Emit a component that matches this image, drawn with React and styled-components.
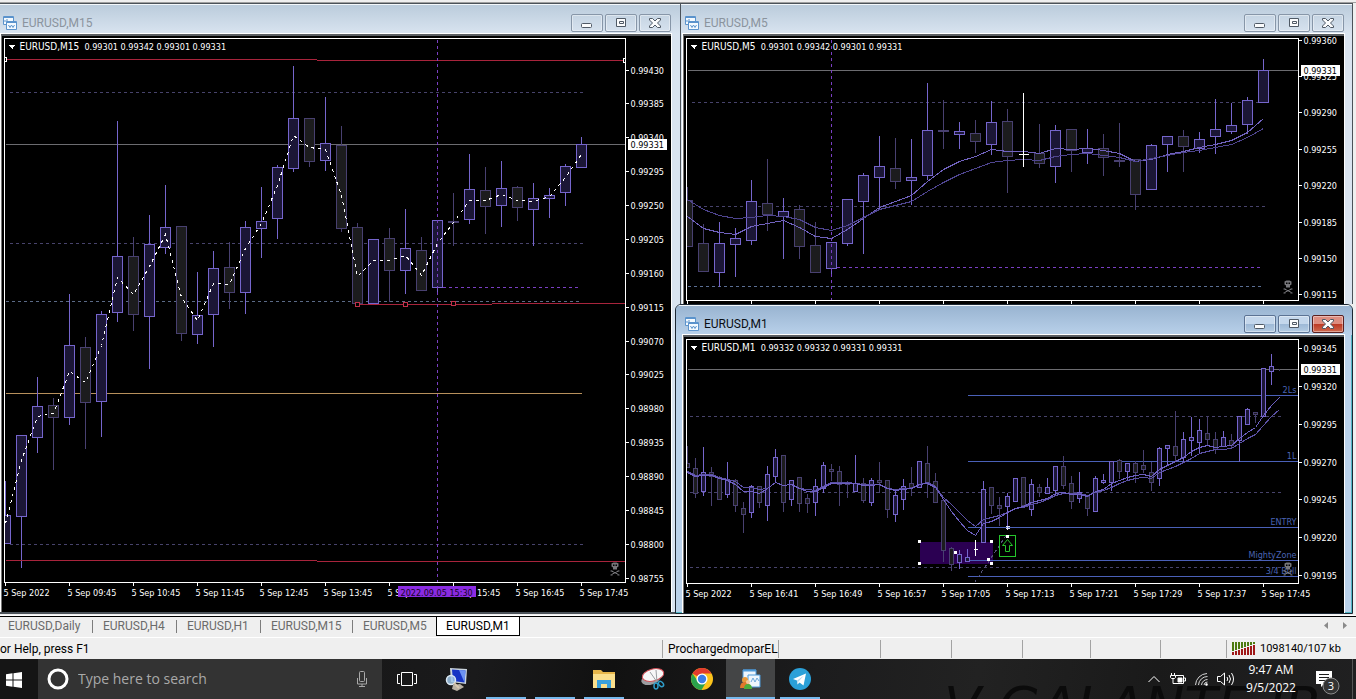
import React from 'react'
import styled, {createGlobalStyle, css} from 'styled-components'

const GlobalStyle = createGlobalStyle`
* {
    box-sizing: border-box;
}
body {
    margin: 0;
    overflow: hidden;
    background-color: #efefef;
    font-family: Roboto, 'Open Sans', sans-serif;
    font-size: 12px;
}
button {
    margin: 0;
    padding: 0;
    border: 0;
    background: none;
    font: inherit;
    color: inherit;
}
`

/* ---------- terminal windows ---------- */

const ToolbarEdge = styled.div`
height: 3px;
background-color: #efefef;
border-bottom: 1px solid #a0a0a0;
`

const Workspace = styled.main`
display: grid;
grid-template-columns: minmax(0, 681fr) minmax(0, 672fr);
padding-right: 3px;
height: 611px;
overflow: hidden;
`

const RightColumn = styled.div`
display: flex;
flex-direction: column;
min-width: 0;
`

const frames = {
    idle: {frame: '#d9e4f0', top: '#bbccdc', edge: '#4b5259', text: '#8b949e'},
    active: {frame: '#b9d1ea', top: '#99b4d1', edge: '#1c2733', text: '#0b0f14'}
}

const StyledWindow = styled.section`
display: flex;
flex-direction: column;
position: relative;
height: ${p => p.$height}px;
flex-shrink: 0;
overflow: hidden;
padding: 0 ${p => p.$right}px ${p => p.$base}px ${p => p.$left}px;
background-color: ${p => p.$skin.frame};
border-top: 1px solid ${p => p.$skin.edge};
border-right: 1px solid ${p => p.$skin.edge};
border-bottom: ${p => p.$bottom}px solid ${p => p.$skin.edge};
${p => p.$active && css`
    margin-left: -6px;
    border-left: 1px solid ${p.$skin.edge};
    border-radius: 6px 6px 0 0;
    box-shadow: inset 0 -1px #4fb6c4, inset -1px 0 #4fb6c4;
`}
`

const TitleBar = styled.header`
display: flex;
align-items: center;
flex-shrink: 0;
gap: 5px;
height: 30px;
margin: 0 -${p => p.$right}px 0 -${p => p.$left}px;
padding: 6px ${p => p.$right}px 0 ${p => p.$left + 2}px;
border-top: 1px solid #f4f8fb;
background: linear-gradient(${p => p.$skin.top}, ${p => p.$skin.frame});
color: ${p => p.$skin.text};
h2 {
    flex: 1;
    margin: 0;
    font-size: 12px;
    line-height: 16px;
    font-weight: 400;
}
`

const WindowButtons = styled.div`
display: flex;
gap: 2px;
`

const WindowButton = styled.button`
display: flex;
align-items: center;
justify-content: center;
width: 32px;
height: 18px;
border: 1px solid #8796a8;
border-radius: 2px;
box-shadow: inset 0 0 0 1px rgba(255, 255, 255, 0.4);
${p => p.$active && css`
    border-color: #5c7394;
    background: linear-gradient(#c4d7ec 50%, #9db8d6 50%, #b4cce4);
`}
${p => p.$danger && css`
    border-color: #5a2020;
    background: linear-gradient(#dd8d80 50%, #bb3824 50%, #cf6a4f);
`}
`

const ChartArea = styled.div`
display: grid;
flex: 1;
grid-template-columns: minmax(0, 1fr) 45px;
grid-template-rows: ${p => p.$plot}px minmax(0, 1fr);
padding: 2px 0 0 2px;
background-color: #000;
border-top: 2px solid #5a5e62;
border-left: 1px solid #777;
box-shadow: 0 0 0 1px #fff;
`

const Plot = styled.svg`
display: block;
width: 100%;
height: 100%;
border: 1px solid #fff;
overflow: hidden;
`

const Axis = styled.svg`
display: block;
width: 100%;
height: 100%;
grid-column: ${p => p.$wide ? '1 / 3' : 'auto'};
overflow: visible;
`

const ChartText = styled.text`
font-family: 'DejaVu Sans Condensed', 'DejaVu Sans', sans-serif;
font-size: 9px;
fill: ${p => p.$color || '#fff'};
white-space: pre;
tspan {
    font-size: 10px;
}
`

const RED = '#a8243c'
const PURPLE = '#7a3fc4'
const DASH = '#47436b'
const BLUE = '#4a60b8'
const UP = '#7565cc'
const DOWN = '#484070'

// candles: [high, open/close top, open/close bottom, low, rising]
const m15 = {
    title: 'EURUSD,M15',
    quote: '  0.99301 0.99342 0.99301 0.99331',
    origin: [5, 39],
    edge: [626, 583],
    step: 16,
    half: 5,
    candles: [
        [480, 515, 543, 543, 1], [435, 435, 516, 567, 1], [376, 406, 437, 452, 1], [397, 405, 417, 469, 0],
        [293, 345, 417, 424, 1], [336, 347, 402, 448, 0], [310, 314, 401, 436, 1], [120, 256, 312, 321, 1],
        [236, 256, 314, 330, 0], [214, 244, 316, 368, 1], [184, 227, 247, 253, 1], [225, 226, 333, 340, 0],
        [271, 315, 334, 343, 1], [250, 268, 314, 346, 1], [241, 267, 292, 308, 0], [220, 227, 292, 313, 1],
        [186, 221, 228, 257, 1], [164, 167, 218, 238, 1], [65, 118, 168, 171, 1], [118, 118, 161, 166, 0],
        [96, 143, 160, 170, 1], [125, 145, 228, 231, 0], [222, 227, 303, 303, 0], [238, 239, 303, 303, 1],
        [227, 238, 270, 301, 0], [208, 248, 270, 293, 1], [236, 250, 290, 290, 0], [220, 220, 287, 293, 1],
        [192, 221, 222, 245, 0], [153, 189, 219, 223, 1], [166, 190, 206, 233, 0], [160, 188, 205, 226, 1],
        [185, 187, 207, 220, 0], [182, 198, 209, 245, 1], [187, 195, 198, 217, 1], [163, 166, 192, 205, 1],
        [136, 144, 167, 167, 1]
    ],
    averages: [{
        color: '#fff',
        dash: '3 4',
        values: [523, 460, 416, 413, 371, 382, 345, 277, 294, 266, 234, 297, 320, 283, 284, 248, 223, 185, 135, 147,
            149, 195, 276, 260, 260, 255, 275, 243, 222, 200, 200, 194, 200, 201, 196, 177, 154]
    }],
    price: 144,
    prices: [[70, '0.99430'], [103, '0.99385'], [137, '0.99340'], [171, '0.99295'], [205, '0.99250'], [239, '0.99205'],
        [273, '0.99160'], [307, '0.99115'], [341, '0.99070'], [374, '0.99025'], [408, '0.98980'], [442, '0.98935'],
        [476, '0.98890'], [510, '0.98845'], [544, '0.98800'], [578, '0.98755']],
    times: ['2022', '09:45', '10:45', '11:45', '12:45', '13:45', '14:45', '15:45', '16:45', '17:45'],
    // lines: [x1, y1, x2, y2, color, dash]
    lines: [
        [9, 92, 582, 92, DASH, '3 3'], [9, 243, 582, 243, DASH, '3 3'], [9, 544, 582, 544, DASH, '3 3'],
        [5, 301, 578, 301, '#5b6a86', '3 3'], [5, 393, 581, 393, '#b8905c']
    ],
    marks: [
        [5, 59, 316, 59, RED], [316, 60, 625, 60, RED], [357, 304, 491, 304, RED], [491, 303, 625, 303, RED],
        [5, 560, 316, 560, RED], [316, 561, 625, 561, RED],
        [437, 39, 437, 582, PURPLE, '3 3'], [442, 287, 578, 287, PURPLE, '3 3']
    ],
    skull: [610, 562]
}

const m5 = {
    title: 'EURUSD,M5',
    quote: '  0.99301 0.99342 0.99301 0.99331',
    origin: [687, 39],
    edge: [1299, 301],
    step: 16,
    half: 5,
    candles: [
        [186, 200, 246, 246, 0], [223, 243, 271, 271, 0], [221, 243, 272, 286, 1], [227, 238, 244, 276, 1],
        [179, 201, 240, 244, 1], [158, 203, 214, 230, 0], [197, 211, 216, 258, 1], [204, 209, 246, 258, 0],
        [221, 245, 272, 272, 0], [242, 242, 268, 276, 1], [199, 199, 243, 245, 1], [172, 175, 201, 253, 1],
        [135, 166, 177, 208, 1], [137, 168, 181, 188, 0], [138, 177, 180, 204, 1], [82, 130, 175, 179, 1],
        [99, 130, 131, 148, 0], [121, 131, 134, 148, 1], [119, 133, 141, 152, 0], [100, 122, 144, 154, 1],
        [108, 121, 156, 192, 0], null, [123, 153, 163, 167, 0], [124, 130, 166, 182, 1],
        [129, 129, 150, 171, 0], [128, 148, 152, 163, 1], [133, 148, 157, 175, 0], [122, 160, 161, 166, 0],
        [159, 159, 194, 209, 0], [143, 145, 189, 189, 1], [136, 136, 144, 171, 1], [129, 136, 146, 171, 0],
        [131, 139, 148, 152, 1], [98, 129, 136, 153, 1], [102, 125, 131, 133, 1], [96, 100, 124, 133, 1],
        [58, 70, 102, 102, 1]
    ],
    averages: [{
        color: '#7062be',
        values: [216, 228, 232, 234, 226, 223, 220, 227, 236, 238, 229, 218, 207, 201, 195, 181, 169, 161, 156, 149,
            151, 151, 153, 148, 149, 148, 150, 153, 161, 159, 154, 151, 147, 144, 140, 132, 118]
    }, {
        color: '#4f4590',
        values: [199, 209, 215, 218, 217, 215, 216, 219, 227, 230, 225, 217, 209, 205, 201, 191, 182, 174, 168, 162,
            160, 159, 160, 156, 154, 153, 155, 157, 161, 158, 155, 152, 150, 147, 144, 137, 128]
    }],
    price: 70,
    prices: [[40, '0.99360'], [76, '0.99325'], [112, '0.99290'], [149, '0.99255'], [185, '0.99220'], [222, '0.99185'],
        [258, '0.99150'], [294, '0.99115']],
    times: [],
    lines: [
        [691, 102, 1264, 102, DASH, '3 3'], [691, 206, 1264, 206, DASH, '3 3'], [687, 286, 1261, 286, '#5b6f94', '3 3']
    ],
    marks: [
        [831, 39, 831, 300, PURPLE, '3 3'], [836, 267, 1261, 267, PURPLE, '3 3'],
        [1023, 92, 1023, 166, '#fff'], [1018, 154, 1028, 154, '#fff']
    ],
    skull: [1283, 280]
}

const m1 = {
    title: 'EURUSD,M1',
    quote: '  0.99332 0.99332 0.99331 0.99331',
    origin: [687, 340],
    edge: [1299, 584],
    step: 8,
    half: 2,
    candles: [
        [445, 463, 467, 467, 0], [457, 468, 493, 497, 0], [446, 472, 491, 495, 1], [466, 472, 476, 505, 0],
        [475, 477, 499, 499, 0], [461, 480, 494, 497, 1], [478, 480, 505, 511, 0], [501, 508, 514, 532, 0],
        [484, 486, 512, 517, 1], [485, 486, 502, 507, 0], [465, 474, 505, 520, 1], [448, 457, 476, 481, 1],
        [455, 455, 502, 511, 0], [480, 480, 499, 505, 1], [477, 477, 503, 511, 0], [493, 498, 503, 512, 0],
        [478, 486, 502, 515, 1], [461, 465, 488, 492, 1], [463, 469, 471, 480, 0], [465, 471, 484, 505, 0],
        [480, 482, 484, 497, 0], [454, 483, 491, 491, 1], [477, 483, 500, 502, 0], [477, 480, 502, 505, 1],
        [461, 480, 482, 492, 0], [480, 480, 509, 517, 0], [490, 495, 514, 521, 1], [478, 486, 499, 509, 1],
        [466, 483, 487, 495, 0], [460, 461, 487, 487, 1], [445, 463, 482, 497, 0], [472, 481, 502, 502, 0],
        [498, 500, 550, 561, 0], [546, 548, 564, 570, 0], [549, 554, 562, 568, 1], [548, 557, 561, 561, 1],
        null, [480, 489, 542, 542, 1], [487, 487, 505, 513, 0], [496, 505, 508, 525, 0],
        [492, 496, 506, 526, 1], [478, 478, 501, 501, 1], [477, 477, 505, 505, 0], [478, 484, 509, 515, 1],
        [483, 487, 492, 496, 0], [477, 487, 493, 493, 1], [466, 466, 490, 494, 1], [455, 466, 485, 488, 0],
        [475, 483, 501, 508, 0], [471, 492, 498, 502, 1], [494, 496, 508, 515, 0], [475, 478, 511, 511, 1],
        [473, 480, 482, 483, 1], [461, 461, 482, 490, 1], [458, 460, 471, 478, 0], [462, 463, 471, 480, 1],
        [460, 463, 472, 482, 0], [449, 465, 469, 472, 0], [461, 472, 482, 490, 0], [446, 448, 478, 485, 1],
        [445, 445, 448, 465, 1], [410, 446, 455, 461, 0], [431, 439, 457, 461, 1], [416, 437, 440, 455, 1],
        [418, 430, 442, 453, 1], [416, 433, 439, 445, 0], [431, 439, 449, 453, 0], [430, 437, 446, 446, 1],
        [433, 440, 445, 447, 0], [415, 416, 440, 461, 1], [407, 409, 424, 424, 1], [412, 412, 414, 422, 0],
        [368, 368, 416, 416, 1], [353, 366, 371, 384, 1], [368, 369, 369, 370, 0]
    ],
    averages: [{
        color: '#5a50a4',
        values: [471, 475, 474, 474, 477, 479, 481, 487, 487, 489, 488, 482, 485, 484, 488, 489, 490, 486, 482, 482,
            482, 483, 484, 484, 484, 488, 489, 488, 488, 484, 482, 486, 497, 504, 512, 520, 526, 519, 517, 515,
            512, 508, 507, 504, 502, 499, 495, 493, 493, 493, 495, 492, 490, 487, 483, 480, 478, 477, 478, 472,
            469, 466, 462, 458, 453, 451, 449, 449, 448, 443, 438, 434, 425, 416, 409]
    }, {
        color: '#6c5fc0',
        values: [472, 476, 475, 475, 478, 480, 484, 491, 491, 493, 488, 482, 485, 484, 488, 491, 491, 487, 483, 483,
            483, 483, 485, 485, 484, 488, 490, 489, 488, 484, 483, 487, 499, 511, 521, 530, 535, 523, 521, 517,
            512, 508, 506, 502, 500, 498, 493, 492, 494, 494, 496, 491, 489, 483, 480, 477, 475, 474, 476, 469,
            465, 461, 457, 451, 447, 445, 447, 446, 445, 438, 432, 427, 415, 405, 397]
    }],
    price: 369,
    prices: [[348, '0.99345'], [386, '0.99320'], [424, '0.99295'], [462, '0.99270'], [499, '0.99245'],
        [537, '0.99220'], [575, '0.99195']],
    times: ['2022', '16:41', '16:49', '16:57', '17:05', '17:13', '17:21', '17:29', '17:37', '17:45'],
    lines: [
        [689, 416, 1280, 416, DASH, '3 3'], [689, 492, 1280, 492, DASH, '3 3'], [689, 567, 1280, 567, DASH, '3 3'],
        [967, 395, 1298, 395, BLUE], [967, 461, 1298, 461, BLUE], [967, 527, 1298, 527, BLUE],
        [967, 560, 1298, 560, BLUE], [967, 576, 1298, 576, BLUE],
        [974, 582, 1007, 533, '#55557a', '3 3']
    ],
    marks: [[975, 539, 975, 555, '#fff'], [973, 549, 977, 549, '#fff']],
    labels: [[389, '2Ls'], [455, '1L'], [521, 'ENTRY'], [554, 'MightyZone'], [570, '3/4 Bull']],
    skull: [1283, 562]
}

const Line = ({at: [x1, y1, x2, y2, color, dash]}) => (
    <line x1={x1} y1={y1} x2={x2} y2={y2} stroke={color} strokeDasharray={dash} />
)

const Handle = ({x, y}) => <rect x={x - 1} y={y - 1} width='2' height='2' fill='#fff' stroke='#fff' />

const Candle = ({x, half, candle: [high, top, bottom, low, rising]}) => (
    <g stroke={rising ? UP : DOWN}>
        <path d={`M${x} ${high}V${top}M${x} ${bottom}V${low}`} />
        <rect x={x - half} y={top} width={half * 2} height={bottom - top} fill={rising ? '#1b1636' : '#1c1c1e'} />
    </g>
)

const Skull = ({at: [x, y]}) => (
    <g transform={`translate(${x} ${y})`} stroke='none' fill='#77777b' shapeRendering='auto'>
        <path d='M3 0h3l2 1v3L6.500 5v2h-4V5L1 4V1z' />
        <path d='M2.500 2h1.500v1.500H2.500zM5 2h1.500v1.500H5z' fill='#000' />
        <path d='M1 8.500l7 3.500M8 8.500L1 12' stroke='#77777b' strokeWidth='1' />
        <path d='M0 8h2v1H0zM7 8h2v1H7zM0 12h2v1H0zM7 12h2v1H7z' />
    </g>
)

const M15Marks = () => (
    <g fill='#000'>
        {[[357, 304], [405, 304], [453, 303]].map(([x, y]) => (
            <rect key={x} x={x - 2} y={y - 2} width='4' height='4' stroke='#c0304a' />
        ))}
        <rect x='4' y='57' width='2' height='4' stroke='#fff' />
        <rect x='623' y='58' width='2' height='4' stroke='#fff' />
    </g>
)

const M1Marks = () => (
    <g>
        {[[919, 541], [991, 541], [919, 563], [991, 563], [955, 552], [988, 559]].map(([x, y]) => (
            <Handle key={`${x}-${y}`} x={x} y={y} />
        ))}
        <path d='M1005 526h4M1005 528h4M1007 525v4' stroke='#dde' />
        <rect x='999' y='535' width='16' height='21' fill='none' stroke='#25c52c' />
        <path d='M1007 539l-5 6h3v6h4v-6h3z' fill='none' stroke='#25c52c' shapeRendering='auto' />
        <Handle x={1007} y={536} />
    </g>
)

const Chart = ({data, children, zone}) => {
    const {origin: [left, top], edge: [right, bottom], step, half} = data
    const xAt = i => left + i * step
    // half pixel keeps one pixel strokes sharp
    const shift = (x, y) => `translate(${0.5 - x} ${0.5 - y})`

    return (
        <ChartArea $plot={bottom - top + 1}>
            <Plot role='img' aria-label={data.title}>
                <g transform={shift(left, top)} shapeRendering='crispEdges' fill='none'>
                    {zone}
                    {data.lines.map((line, i) => <Line key={i} at={line} />)}
                    <Line at={[left, data.price, right, data.price, '#6c6c70']} />
                    {data.candles.map((candle, i) => (
                        candle && <Candle key={i} x={xAt(i)} half={half} candle={candle} />
                    ))}
                    {data.averages.map(({color, dash, values}) => (
                        <polyline
                            key={color}
                            points={values.map((y, i) => `${xAt(i)},${y}`).join(' ')}
                            stroke={color}
                            strokeDasharray={dash}
                        />
                    ))}
                    {data.marks.map((line, i) => <Line key={i} at={line} />)}
                    {children}
                    {data.labels && data.labels.map(([y, label]) => (
                        <ChartText key={label} x='1296' y={y + 3} textAnchor='end' $color='#4a64b4'>{label}</ChartText>
                    ))}
                    <Skull at={data.skull} />
                    <path d={`M${left + 3} ${top + 5}h7l-3 4h-1z`} fill='#fff' />
                    <ChartText x={left + 14} y={top + 10}><tspan>{data.title}</tspan>{data.quote}</ChartText>
                </g>
            </Plot>
            <Axis>
                <g transform={shift(right, top - 1)} shapeRendering='crispEdges'>
                    {data.prices.map(([y, label]) => (
                        <g key={label}>
                            <path d={`M${right - 1} ${y}h3`} stroke='#fff' />
                            <ChartText x={right + 4} y={y + 3}>{label}</ChartText>
                        </g>
                    ))}
                    <rect x={right + 2} y={data.price - 5} width='38' height='10' fill='#fff' stroke='#fff' />
                    <ChartText x={right + 4} y={data.price + 3} $color='#000'>0.99331</ChartText>
                </g>
            </Axis>
            <Axis $wide>
                <g transform={shift(left - 1, bottom)} shapeRendering='crispEdges'>
                    {[...Array(10)].map((_, i) => (
                        <path key={i} d={`M${left + i * 64} ${bottom - 1}v3`} stroke='#fff' />
                    ))}
                    {data.times.map((time, i) => (
                        <ChartText key={time} x={left - 2 + i * 64} y={bottom + 12}>5 Sep {time}</ChartText>
                    ))}
                    {data === m15 && (
                        <g>
                            <rect x='398' y='586' width='77' height='10' fill='#8a2be2' stroke='#8a2be2' />
                            <ChartText x='400' y='595' $color='#160428'>2022.09.05 15:30</ChartText>
                        </g>
                    )}
                </g>
            </Axis>
        </ChartArea>
    )
}

const ChartIcon = () => (
    <svg width='14' height='14' viewBox='0 0 14 14' fill='#f4faff' stroke='#5b93cc' aria-hidden='true'>
        <path d='M.5 .5h10v8H.5z' />
        <path d='M0 1.500h11' />
        <path d='M2 6V4M4 6V3' fill='none' />
        <path d='M3.500 5.500h10v8h-10z' />
        <path d='M3 6.500h11' />
        <path d='M5.500 9l1.500 2.500L8.500 9l1.500 2.500L11.500 9' fill='none' />
    </svg>
)

const Glyph = ({children}) => (
    <svg width='14' height='12' viewBox='0 0 14 12' fill='#fbfcfd' stroke='#4f5965' aria-hidden='true'>{children}</svg>
)

const ChartWindow = ({data, left, right = 8, height, base = 8, bottom = 1, active, zone, children}) => {
    const skin = active ? frames.active : frames.idle
    return (
        <StyledWindow $skin={skin} $left={left} $right={right} $height={height} $base={base} $bottom={bottom} $active={active}>
            <TitleBar $skin={skin} $left={left} $right={right}>
                <ChartIcon />
                <h2>{data.title}</h2>
                <WindowButtons>
                    <WindowButton $active={active} aria-label='Minimize'>
                        <Glyph><rect x='1.500' y='6.500' width='10' height='4' rx='1' /></Glyph>
                    </WindowButton>
                    <WindowButton $active={active} aria-label='Maximize'>
                        <Glyph><path d='M2.500 1.500h9v8h-9z' /><path d='M5.500 4.500h4v2h-4z' /></Glyph>
                    </WindowButton>
                    <WindowButton $active={active} $danger={active} aria-label='Close'>
                        <Glyph><path d='M1.500 1.500h3L7 4l2.500-2.500h3V3l-3 3 3 3v1.500h-3L7 8l-2.500 2.500h-3V9l3-3-3-3z' /></Glyph>
                    </WindowButton>
                </WindowButtons>
            </TitleBar>
            <Chart data={data} zone={zone}>{children}</Chart>
        </StyledWindow>
    )
}

/* ---------- chart tabs and status bar ---------- */

const TabBar = styled.nav`
display: flex;
align-items: flex-start;
height: 22px;
margin-top: 2px;
border-top: 1px solid #000;
border-bottom: 1px solid #fff;
box-shadow: 0 -1px #fff;
color: #6b6b6b;
`

const Tab = styled.button`
position: relative;
width: ${p => p.$width}px;
height: 19px;
line-height: 19px;
padding-left: ${p => p.$first ? 8 : 10}px;
text-align: left;
&::after {
    content: '';
    position: absolute;
    top: 3px;
    right: 0;
    width: 1px;
    height: 13px;
    background-color: #7c7c7c;
}
${p => p.$last && css`
    &::after {
        display: none;
    }
`}
${p => p.$active && css`
    padding-left: 9px;
    color: #000;
    background-color: #fff;
    border: solid #000;
    border-width: 0 1px 1px;
    &::after {
        display: none;
    }
`}
`

const TabScroll = styled.div`
display: flex;
gap: 15px;
margin-left: auto;
padding: 4px 9px 0 0;
svg {
    display: block;
}
`

const StatusBar = styled.footer`
display: flex;
align-items: center;
height: 21px;
color: #000;
`

const StatusCell = styled.div`
display: flex;
align-items: center;
gap: 5px;
height: 18px;
width: ${p => p.$width}px;
padding-left: 5px;
border-left: 1px solid #a3a3a3;
font-size: ${p => p.$small ? 11 : 12}px;
white-space: nowrap;
`

const StatusMessage = styled.div`
flex: 1;
`

const tabs = [['EURUSD,Daily', 93], ['EURUSD,H4', 84], ['EURUSD,H1', 84], ['EURUSD,M15', 92], ['EURUSD,M5', 83], ['EURUSD,M1', 84]]

const Traffic = () => (
    <svg width='23' height='13' viewBox='0 0 23 13' aria-hidden='true'>
        {[0, 3, 6, 9, 12, 15, 18, 21].map((x, i) => (
            <g key={x}>
                <rect x={x} y='0' width='2' height={9 - i} fill='#4d7a10' />
                <rect x={x} y={10 - i} width='2' height={3 + i} fill='#a01818' />
            </g>
        ))}
    </svg>
)

/* ---------- taskbar ---------- */

const Taskbar = styled.footer`
display: flex;
position: relative;
height: 40px;
overflow: hidden;
background: linear-gradient(100deg, #121212, #1a1a1b 35%, #111 45%, #1c1c1d 60%, #222 72%, #1a1a1a 85%, #202021);
color: #fff;
`

const Wallpaper = styled.span`
position: absolute;
top: 20px;
right: 34px;
font: italic 54px/56px 'DejaVu Sans', sans-serif;
color: #0b0b0b;
white-space: nowrap;
`

const StartButton = styled.button`
width: 38px;
padding: 4px 0 0 6px;
text-align: left;
background-color: #151515;
`

const Search = styled.label`
display: flex;
align-items: center;
gap: 9px;
width: 344px;
padding: 0 13px 0 9px;
background-color: #333;
input {
    flex: 1;
    min-width: 0;
    padding: 0;
    border: 0;
    outline: 0;
    background: none;
    color: #fff;
    font: 14px/20px 'Open Sans', sans-serif;
}
input::placeholder {
    color: #a9a9a9;
    opacity: 1;
}
`

const Apps = styled.nav`
display: flex;
margin-left: 1px;
`

const TaskButton = styled.button`
display: flex;
align-items: center;
justify-content: center;
width: 49px;
height: 40px;
${p => p.$running && css`
    background: linear-gradient(#76b9ed, #76b9ed) bottom / 40px 2px no-repeat;
`}
${p => p.$focused && css`
    background: linear-gradient(#76b9ed, #76b9ed) bottom / 100% 2px no-repeat #444546;
`}
`

const Tray = styled.div`
display: flex;
align-items: center;
position: relative;
margin-left: auto;
svg {
    display: block;
}
`

const TrayButton = styled.button`
display: flex;
justify-content: center;
width: 24px;
`

const Clock = styled.div`
width: 66px;
text-align: center;
font: 12px/18px 'Open Sans', sans-serif;
`

const Notifications = styled.button`
display: flex;
justify-content: center;
width: 49px;
height: 40px;
padding-top: 11px;
margin-right: 3px;
border-right: 1px solid #555;
`

const Desktop = () => (
    <svg width='24' height='24' viewBox='0 0 24 24'>
        <path d='M5 1l17 1-1 15-15-2z' fill='#c9d3dc' />
        <path d='M7 2.500l13.500 1-1 12L8 14z' fill='#1634c4' />
        <path d='M14 3l6.500 .5-1 12z' fill='#6d93f2' />
        <path d='M8 18l7-1 4 3-7 4-5-2z' fill='#b9b1a4' />
        <circle cx='6' cy='13' r='4.500' fill='#9fc6e8' fillOpacity='.85' stroke='#dce9f4' strokeWidth='1.500' />
        <path d='M9 16l5 5' stroke='#d8c9b0' strokeWidth='2' />
    </svg>
)

const Folder = () => (
    <svg width='22' height='20' viewBox='0 0 22 20'>
        <path d='M0 1h8l2 2h12v16H0z' fill='#e7b64a' />
        <path d='M0 5h22v14H0z' fill='#fbdf8c' />
        <path d='M4 11h14v8h-4v-4H8v4H4z' fill='#3aa0dc' />
    </svg>
)

const Snip = () => (
    <svg width='24' height='24' viewBox='0 0 24 24'>
        <ellipse cx='10' cy='12' rx='10' ry='5.500' fill='#9b9ca0' transform='rotate(-18 10 12)' />
        <ellipse cx='12' cy='8' rx='11' ry='6' fill='#f7f7f7' stroke='#d05058' strokeWidth='1' transform='rotate(-14 12 8)' />
        <path d='M9 5l7 10M15 3l1 12' stroke='#9a9ea2' />
        <ellipse cx='15' cy='19' rx='2' ry='3' fill='none' stroke='#2e9cc8' strokeWidth='1.500' />
        <ellipse cx='20' cy='17' rx='2' ry='3' fill='none' stroke='#2e9cc8' strokeWidth='1.500' transform='rotate(-45 20 17)' />
    </svg>
)

const Chrome = () => (
    <svg width='22' height='22' viewBox='0 0 22 22'>
        <circle cx='11' cy='11' r='11' fill='#fbc31c' />
        <path d='M11 11L1.500 5.500A11 11 0 0 1 20.500 5.500H11z' fill='#e23b2e' />
        <path d='M1.500 5.500A11 11 0 0 0 10.500 22l5-8.500-4.500-2.500-5 1z' fill='#2ba24c' />
        <circle cx='11' cy='11' r='5.500' fill='#fff' />
        <circle cx='11' cy='11' r='4.200' fill='#3b7de8' />
    </svg>
)

const MetaTrader = () => (
    <svg width='22' height='20' viewBox='0 0 22 20'>
        <path d='M3 1h13v12H3z' fill='#eef6fd' stroke='#4d9bdb' />
        <path d='M3 1.500h13' stroke='#4d9bdb' strokeWidth='2' />
        <path d='M8 6h12v12H8z' fill='#eef6fd' stroke='#4d9bdb' />
        <path d='M11 13l2-4 2 4 2-4 2 3' fill='none' stroke='#6fa9dc' />
        <circle cx='5' cy='11' r='3' fill='#e89a3c' />
        <path d='M0 19q0-6 5-6t5 6z' fill='#e1782c' />
        <circle cx='8' cy='13' r='2' fill='#f2c9a0' />
        <path d='M4 20q0-5 4-5t4 5z' fill='#4cae3c' />
    </svg>
)

const Telegram = () => (
    <svg width='22' height='22' viewBox='0 0 22 22'>
        <circle cx='11' cy='11' r='11' fill='#2ba0d8' />
        <path d='M4 11l13-5.500-2.500 12-4-3-2 2-.5-4z' fill='#fff' />
        <path d='M8 12.500l7-5-5.500 6-1 3z' fill='#b6d9ee' />
    </svg>
)

const apps = [
    {name: 'Remote desktop', icon: <Desktop />},
    {name: 'Application 1', running: true},
    {name: 'Application 2', running: true},
    {name: 'File Explorer', icon: <Folder />, running: true},
    {name: 'Snipping Tool', icon: <Snip />},
    {name: 'Chrome', icon: <Chrome />},
    {name: 'MetaTrader', icon: <MetaTrader />, focused: true},
    {name: 'Telegram', icon: <Telegram />, running: true}
]

const App = () => {
    return (
        <>
            <GlobalStyle />
            <ToolbarEdge />
            <Workspace>
                <ChartWindow data={m15} left={1} right={9} height={611} bottom={2}>
                    <M15Marks />
                </ChartWindow>
                <RightColumn>
                    <ChartWindow data={m5} left={2} height={301} base={0} bottom={0} />
                    <ChartWindow
                        data={m1}
                        left={7}
                        height={310}
                        active
                        zone={<rect x='919' y='541' width='73' height='22' fill='#2b0052' />}
                    >
                        <M1Marks />
                    </ChartWindow>
                </RightColumn>
            </Workspace>
            <TabBar>
                {tabs.map(([name, width], i) => (
                    <Tab key={name} $width={width} $first={i === 0} $last={i === 4} $active={i === 5}>{name}</Tab>
                ))}
                <TabScroll>
                    <svg width='4' height='9' viewBox='0 0 4 9' fill='#8a8a8a'><path d='M4 1v7L0 4.500z' /></svg>
                    <svg width='4' height='9' viewBox='0 0 4 9' fill='#8a8a8a'><path d='M0 1v7l4-3.500z' /></svg>
                </TabScroll>
            </TabBar>
            <StatusBar>
                <StatusMessage>or Help, press F1</StatusMessage>
                <StatusCell $width={116}>ProchargedmoparEL</StatusCell>
                <StatusCell $width={102} />
                <StatusCell $width={71} />
                <StatusCell $width={71} />
                <StatusCell $width={68} />
                <StatusCell $width={70} />
                <StatusCell $width={66} />
                <StatusCell $width={130} $small>
                    <Traffic />
                    1098140/107 kb
                </StatusCell>
            </StatusBar>
            <Taskbar>
                <Wallpaper>V GALANTE JR</Wallpaper>
                <StartButton aria-label='Start'>
                    <svg width='16' height='16' viewBox='0 0 16 16' fill='#fff'>
                        <path d='M0 2.200L6.500 1.300V7.500H0zM7.500 1.200L16 0V7.500H7.500zM0 8.500H6.500V14.700L0 13.800zM7.500 8.500H16V16L7.500 14.800z' />
                    </svg>
                </StartButton>
                <Search>
                    <svg width='22' height='22' viewBox='0 0 22 22' fill='none' stroke='#fff' strokeWidth='3'>
                        <circle cx='11' cy='11' r='9' />
                    </svg>
                    <input type='text' placeholder='Type here to search' aria-label='Search' />
                    <svg width='14' height='18' viewBox='0 0 14 18' fill='none' stroke='#a9a9a9'>
                        <rect x='4.500' y='1.500' width='5' height='10' rx='1' />
                        <path d='M2.500 8v6h9V8M7 14v3M4 16.500h6' />
                    </svg>
                </Search>
                <TaskButton aria-label='Task view'>
                    <svg width='20' height='16' viewBox='0 0 20 16' fill='none' stroke='#fff'>
                        <path d='M4.500 1.500h11v13h-11zM3 3.500H.5v9H3M17 3.500h2.500v9H17' />
                    </svg>
                </TaskButton>
                <Apps>
                    {apps.map(({name, icon, running, focused}) => (
                        <TaskButton key={name} aria-label={name} $running={running} $focused={focused}>{icon}</TaskButton>
                    ))}
                </Apps>
                <Tray>
                    <TrayButton aria-label='Show hidden icons'>
                        <svg width='12' height='8' viewBox='0 0 12 8' fill='none' stroke='#fff'><path d='M.5 7L6 1.500 11.500 7' /></svg>
                    </TrayButton>
                    <TrayButton aria-label='Battery'>
                        <svg width='16' height='12' viewBox='0 0 16 12' fill='none' stroke='#fff'>
                            <path d='M5.500 2.500h8v8h-8M13.500 5h2v3h-2' />
                            <path d='M8 5h4v4H8z' fill='#fff' />
                            <path d='M1.500 0v2M4.500 0v2M.5 2.500h5v2l-1 1h-3l-1-1zM3 6v4.500h3' />
                        </svg>
                    </TrayButton>
                    <TrayButton aria-label='Network'>
                        <svg width='14' height='14' viewBox='0 0 14 14' fill='none' stroke='#d5d5d5'>
                            <path d='M.5 13A12 12 0 0 1 12 1.500M3.500 13A9 9 0 0 1 12.500 4.500M6.500 13a6 6 0 0 1 6-5.500M9 13a3.500 3.500 0 0 1 3.500-3' />
                            <circle cx='11.500' cy='12.500' r='1' fill='#fff' />
                        </svg>
                    </TrayButton>
                    <TrayButton aria-label='Volume'>
                        <svg width='18' height='14' viewBox='0 0 18 14' fill='none' stroke='#fff'>
                            <path d='M.5 4.500h3l4-3.500v12l-4-3.500h-3zM10 5q1.500 2 0 4M12 3q3 4 0 8M14.500 1q4 6 0 12' />
                        </svg>
                    </TrayButton>
                    <Clock>9:47 AM<br />9/5/2022</Clock>
                    <Notifications aria-label='Notifications'>
                        <svg width='24' height='26' viewBox='0 0 24 26'>
                            <path d='M0 1h16v13H8l-3 3v-3H0z' fill='#fff' />
                            <path d='M3 4.500h10M3 7.500h10M3 10.500h7' stroke='#1d1d1d' />
                            <circle cx='15' cy='16' r='8' fill='#333' stroke='#8a8a8a' />
                            <text x='15' y='20' textAnchor='middle' fill='#fff' fontFamily='Open Sans' fontSize='11'>3</text>
                        </svg>
                    </Notifications>
                </Tray>
            </Taskbar>
        </>
    )
}

export default App
